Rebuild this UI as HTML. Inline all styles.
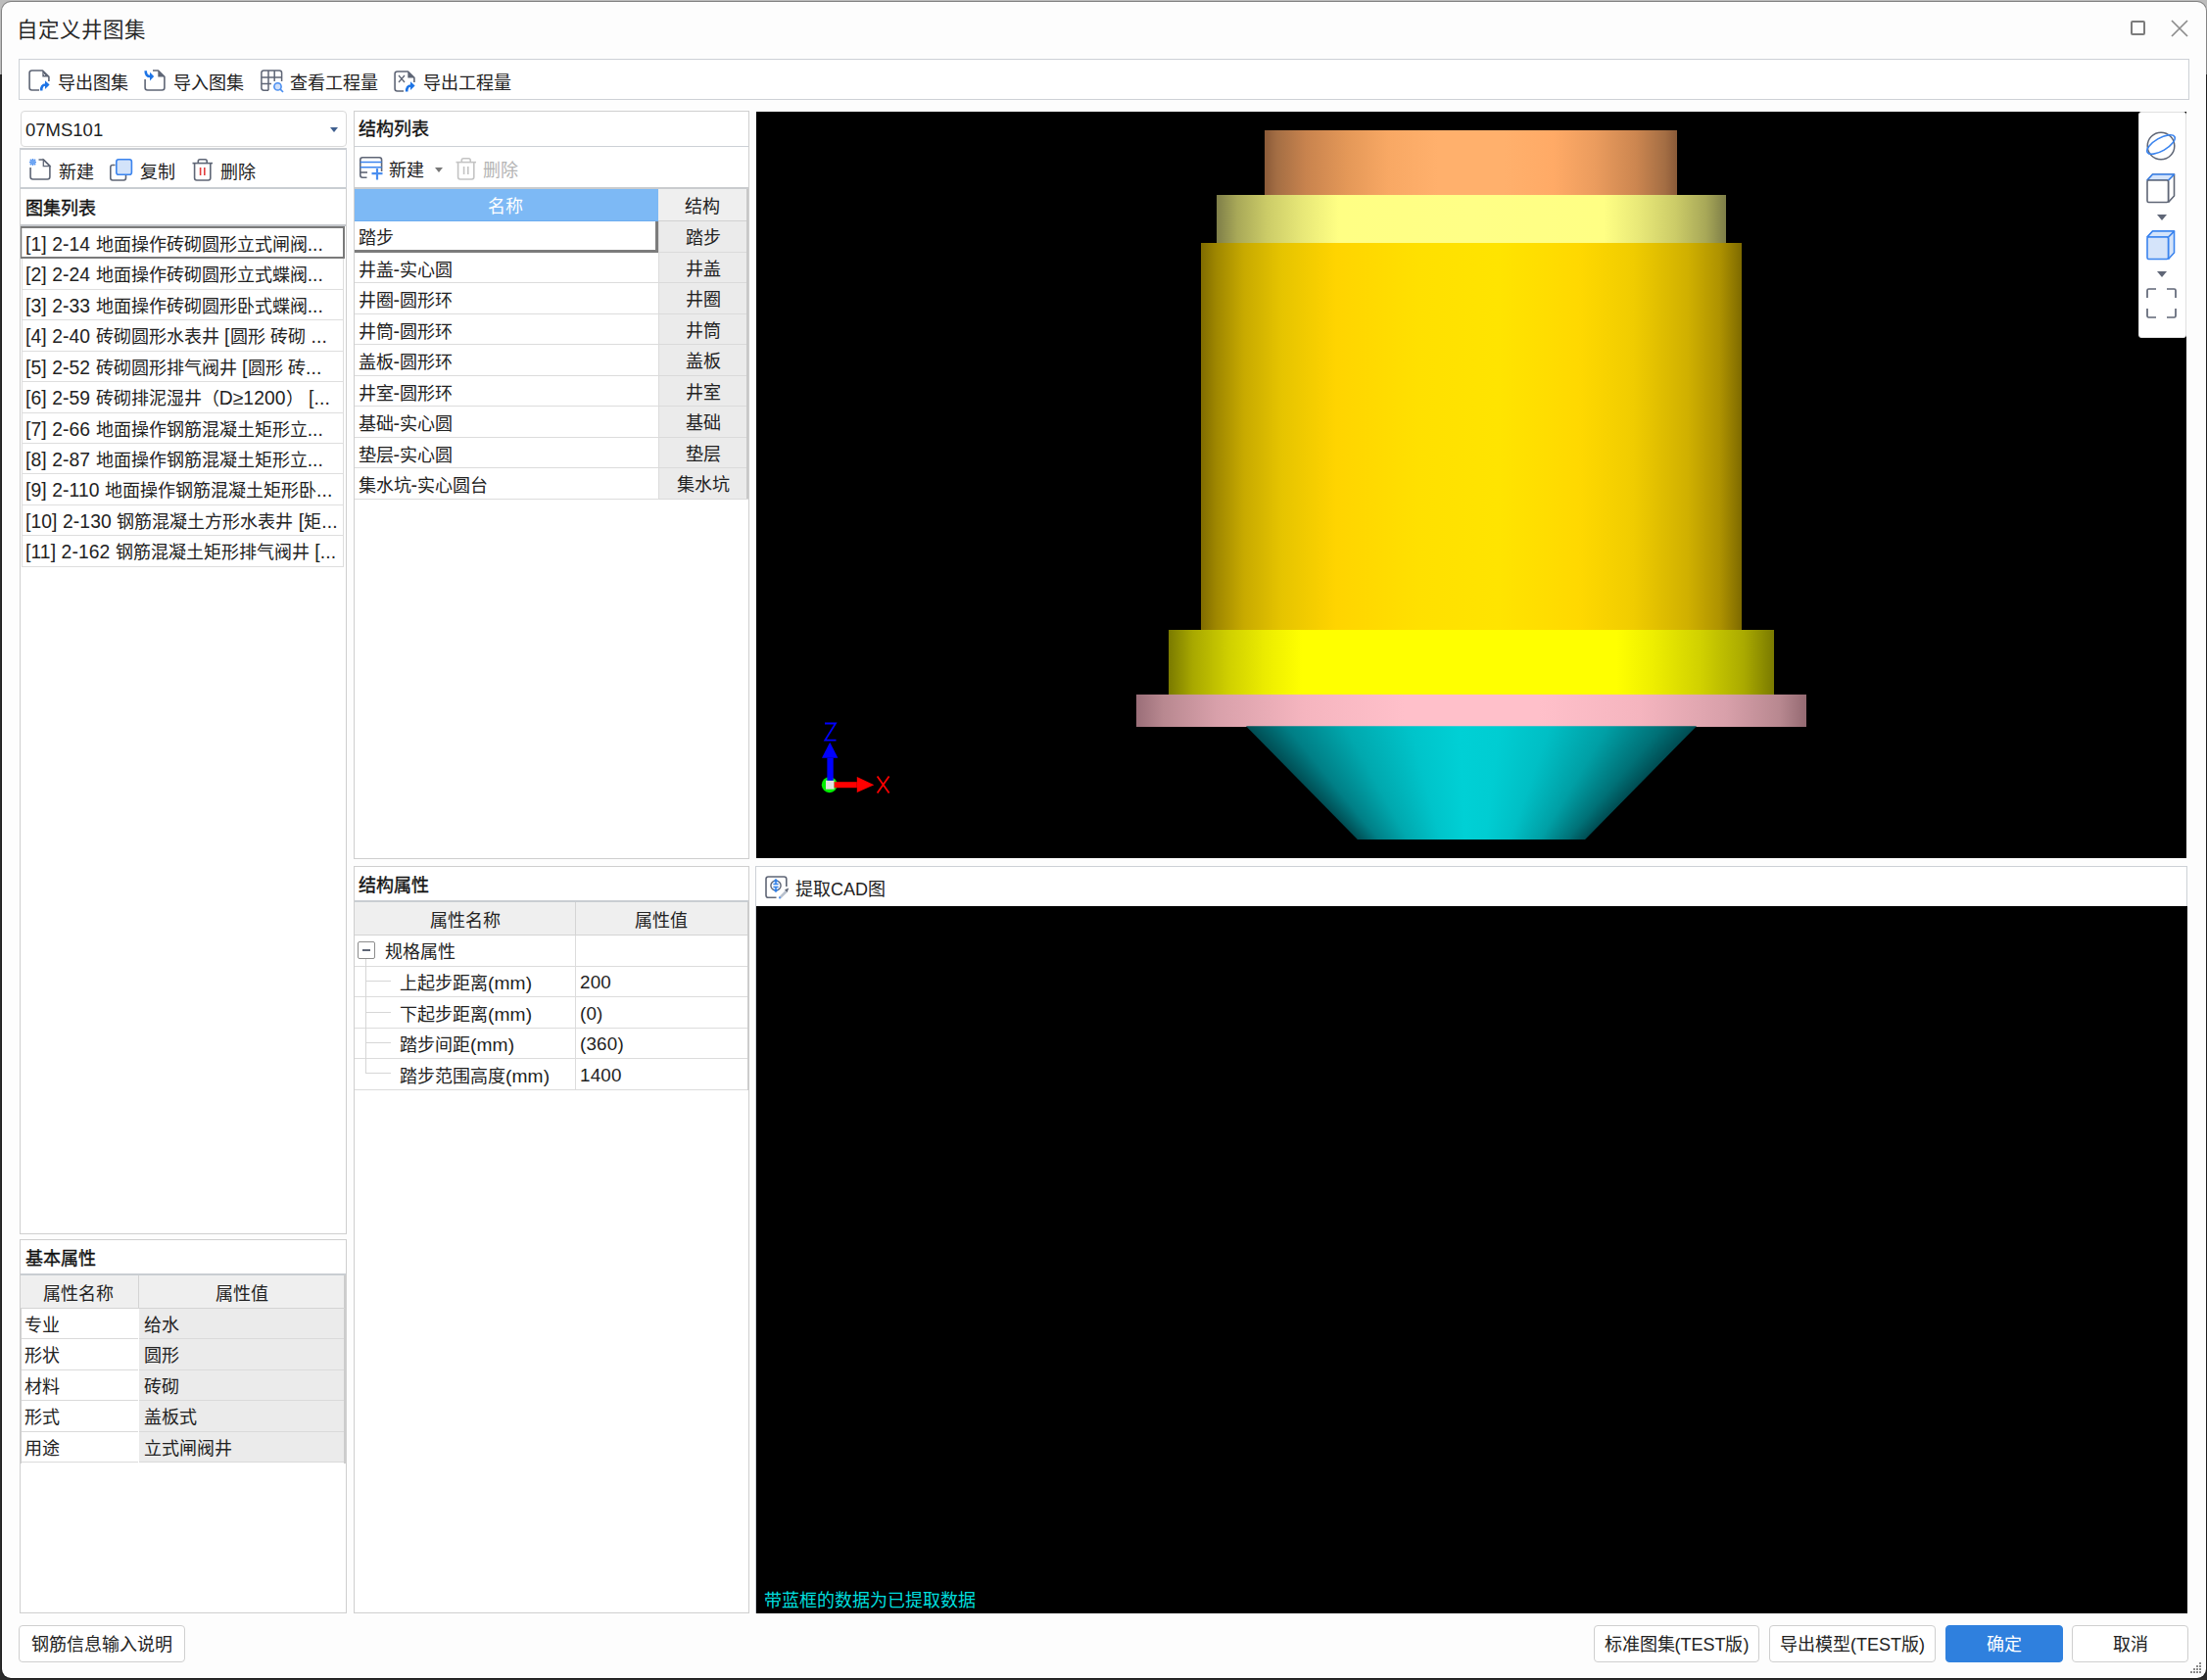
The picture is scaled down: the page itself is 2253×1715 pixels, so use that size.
<!DOCTYPE html>
<html lang="zh-CN">
<head>
<meta charset="utf-8">
<style>
*{margin:0;padding:0;box-sizing:border-box}
html,body{width:2253px;height:1715px;overflow:hidden;background:#2b2b2b}
body{position:relative;font-family:"Liberation Sans",sans-serif;font-size:18px;color:#222}
.a{position:absolute}
.t{position:absolute;white-space:nowrap;line-height:1;}
svg{position:absolute;overflow:visible}
</style>
</head>
<body>

<div class="a" style="left:0px;top:0px;width:2253px;height:76px;background:#bcbcbc"></div>
<div class="a" style="left:0.5px;top:0.5px;width:2252px;height:1713px;background:#fdfdfd;background-clip:padding-box;border:1.5px solid rgba(0,0,0,.3);border-radius:10px"></div>
<div class="t" style="left:16.5px;top:21.2px;font-size:21.5px;color:#2a2a2a;">自定义井图集</div>
<div class="a" style="left:2175px;top:21px;width:15px;height:15px;border:2px solid #7c7c7c;border-radius:2px"></div>
<svg style="left:2216px;top:20px" width="18" height="18" viewBox="0 0 18 18"><path d="M1 1 L17 17 M17 1 L1 17" stroke="#8c8c8c" stroke-width="1.7"/></svg>
<div class="a" style="left:19px;top:60px;width:2216px;height:42px;background:#fff;border:1px solid #cdd1d6"></div>
<svg style="left:29px;top:71px" width="22" height="22" viewBox="0 0 22 22"><path d="M11 21 H3.6 Q1.1 21 1.1 18.5 V3.5 Q1.1 1 3.6 1 H14.5 L20.9 7.4 V12" fill="none" stroke="#5f6676" stroke-width="1.6" stroke-linejoin="round"/><path d="M14.3 1 V7.6 H20.9 Z" fill="#5f6676"/><path d="M15.5 4.5 l1.5 1.5" stroke="#fff" stroke-width="1"/><path d="M13.2 21.5 Q13 15.5 17.5 15.5" fill="none" stroke="#1d74e6" stroke-width="2.6"/><path d="M17 11.2 L21.6 15.6 L17 20 Z" fill="#1d74e6"/></svg>
<div class="t" style="left:59px;top:76px;font-size:18px;color:#222;">导出图集</div>
<svg style="left:147px;top:71px" width="22" height="22" viewBox="0 0 22 22"><path d="M9 1 H14.5 L20.9 7.4 V18.5 Q20.9 21 18.4 21 H3.6 Q1.1 21 1.1 18.5 V10" fill="none" stroke="#5f6676" stroke-width="1.6" stroke-linejoin="round"/><path d="M14.3 1 V7.6 H20.9 Z" fill="#5f6676"/><path d="M1.7 1.3 Q1.5 7 6.5 7" fill="none" stroke="#1d74e6" stroke-width="2.6"/><path d="M6 2.8 L10.2 7.1 L6 11.5 Z" fill="#1d74e6"/></svg>
<div class="t" style="left:177px;top:76px;font-size:18px;color:#222;">导入图集</div>
<svg style="left:266px;top:71px" width="24" height="24" viewBox="0 0 24 24">
<path d="M8 21.2 H3.3 Q0.9 21.2 0.9 18.8 V3.3 Q0.9 0.9 3.3 0.9 H19.2 Q21.6 0.9 21.6 3.3 V12" fill="none" stroke="#5f6676" stroke-width="1.5"/>
<path d="M0.9 8 H21.6 M0.9 14.5 H11 M8 0.9 V21.2 M14.2 0.9 V12" stroke="#5f6676" stroke-width="1.5"/>
<circle cx="17.5" cy="17.4" r="3.6" fill="#cfe0fb" stroke="#4a8ef0" stroke-width="1.6"/>
<path d="M20.2 20.1 L23 23" stroke="#4a8ef0" stroke-width="1.6"/>
</svg>
<div class="t" style="left:296px;top:76px;font-size:18px;color:#222;">查看工程量</div>
<svg style="left:402px;top:72px" width="22" height="22" viewBox="0 0 22 22"><path d="M10 21 H3.6 Q1.1 21 1.1 18.5 V3.5 Q1.1 1 3.6 1 H14.5 L20.9 7.4 V12" fill="none" stroke="#5f6676" stroke-width="1.6" stroke-linejoin="round"/><path d="M14.3 1 V7.6 H20.9 Z" fill="#5f6676"/><path d="M5 5 L11 12 M11 5 L5 12" stroke="#5f6676" stroke-width="1.3"/><path d="M13.2 21.5 Q13 15.5 17.5 15.5" fill="none" stroke="#1d74e6" stroke-width="2.6"/><path d="M17 11.2 L21.6 15.6 L17 20 Z" fill="#1d74e6"/></svg>
<div class="t" style="left:432px;top:76px;font-size:18px;color:#222;">导出工程量</div>
<div class="a" style="left:21px;top:113px;width:333px;height:37px;background:#fff;border:1px solid #d9d9d9;border-radius:4px"></div>
<div class="t" style="left:26px;top:124px;font-size:18.5px;color:#222;">07MS101</div>
<svg style="left:337px;top:130px" width="8" height="5" viewBox="0 0 8 5"><path d="M0 0 H8 L4 5 Z" fill="#3f5f8f"/></svg>
<div class="a" style="left:20px;top:151px;width:334px;height:42px;background:#fff;border:1px solid #cdd1d6;border-top:2px solid #c9cdd2"></div>
<svg style="left:30px;top:162px" width="22" height="22" viewBox="0 0 22 22"><path d="M9.5 1 H14.5 L20.9 7.4 V18.5 Q20.9 21 18.4 21 H3.6 Q1.1 21 1.1 18.5 V9" fill="none" stroke="#5f6676" stroke-width="1.6" stroke-linejoin="round"/><path d="M14.3 1 V7.6 H20.9 Z" fill="none" stroke="#5f6676" stroke-width="1.3"/><path d="M0.8 0.8 L6.2 6.2 M6.2 0.8 L0.8 6.2 M3.5 0 V7 M0 3.5 H7" stroke="#4a8ef0" stroke-width="1.4"/><rect x="1.5" y="1.5" width="4" height="4" fill="#8ab8f6" opacity=".6"/></svg>
<div class="t" style="left:60px;top:167px;font-size:18px;color:#222;">新建</div>
<svg style="left:112px;top:162px" width="24" height="23" viewBox="0 0 24 23">
<path d="M5.5 6.5 H3 Q0.8 6.5 0.8 8.7 V19.8 Q0.8 22 3 22 H14.3 Q16.5 22 16.5 19.8 V16.5" fill="none" stroke="#5f6676" stroke-width="1.6"/>
<rect x="6.8" y="0.8" width="15.6" height="15.4" rx="2.3" fill="#d3e3fa" stroke="#3b84ee" stroke-width="1.6"/>
</svg>
<div class="t" style="left:143px;top:167px;font-size:18px;color:#222;">复制</div>
<svg style="left:196px;top:162px" width="22" height="23" viewBox="0 0 22 23">
<path d="M0.5 4.6 H21" stroke="#5f6676" stroke-width="1.6"/>
<path d="M6.3 4.6 V2.6 Q6.3 0.8 8.1 0.8 H13.4 Q15.2 0.8 15.2 2.6 V4.6" fill="none" stroke="#5f6676" stroke-width="1.6"/>
<path d="M2.6 4.6 V19.8 Q2.6 22 4.8 22 H16.6 Q18.8 22 18.8 19.8 V4.6" fill="none" stroke="#5f6676" stroke-width="1.6"/>
<path d="M8.6 9 V17 M12.8 9 V17" stroke="#e23c3c" stroke-width="1.6"/>
</svg>
<div class="t" style="left:225px;top:167px;font-size:18px;color:#222;">删除</div>
<div class="a" style="left:20px;top:192px;width:334px;height:1068px;background:#fff;border:1px solid #cfcfcf"></div>
<div class="a" style="left:21px;top:193px;width:332px;height:38px;background:#fff;border-bottom:2px solid #c4c7cb"></div>
<div class="a" style="left:21px;top:191px;width:332px;height:2px;background:#c9cdd2"></div>
<div class="t" style="left:26px;top:204px;font-size:18px;color:#111;-webkit-text-stroke:.35px #111">图集列表</div>
<div class="a" style="left:22px;top:232.0px;width:329px;height:32.43px;background:#fff;border:1px solid #dedede"></div>
<div class="t" style="left:26px;top:240.0px;font-size:18px;color:#222;"><span style="font-size:19.3px;letter-spacing:0.1px">[1] 2-14 </span>地面操作砖砌圆形立式闸阀<span style="font-size:19.3px;letter-spacing:0.1px">...</span></div>
<div class="a" style="left:22px;top:263.43px;width:329px;height:32.43px;background:#fff;border:1px solid #dedede"></div>
<div class="t" style="left:26px;top:271.43px;font-size:18px;color:#222;"><span style="font-size:19.3px;letter-spacing:0.1px">[2] 2-24 </span>地面操作砖砌圆形立式蝶阀<span style="font-size:19.3px;letter-spacing:0.1px">...</span></div>
<div class="a" style="left:22px;top:294.86px;width:329px;height:32.43px;background:#fff;border:1px solid #dedede"></div>
<div class="t" style="left:26px;top:302.86px;font-size:18px;color:#222;"><span style="font-size:19.3px;letter-spacing:0.1px">[3] 2-33 </span>地面操作砖砌圆形卧式蝶阀<span style="font-size:19.3px;letter-spacing:0.1px">...</span></div>
<div class="a" style="left:22px;top:326.29px;width:329px;height:32.43px;background:#fff;border:1px solid #dedede"></div>
<div class="t" style="left:26px;top:334.29px;font-size:18px;color:#222;"><span style="font-size:19.3px;letter-spacing:0.1px">[4] 2-40 </span>砖砌圆形水表井<span style="font-size:19.3px;letter-spacing:0.1px"> [</span>圆形<span style="font-size:19.3px;letter-spacing:0.1px"> </span>砖砌<span style="font-size:19.3px;letter-spacing:0.1px"> ...</span></div>
<div class="a" style="left:22px;top:357.72px;width:329px;height:32.43px;background:#fff;border:1px solid #dedede"></div>
<div class="t" style="left:26px;top:365.72px;font-size:18px;color:#222;"><span style="font-size:19.3px;letter-spacing:0.1px">[5] 2-52 </span>砖砌圆形排气阀井<span style="font-size:19.3px;letter-spacing:0.1px"> [</span>圆形<span style="font-size:19.3px;letter-spacing:0.1px"> </span>砖<span style="font-size:19.3px;letter-spacing:0.1px">...</span></div>
<div class="a" style="left:22px;top:389.15px;width:329px;height:32.43px;background:#fff;border:1px solid #dedede"></div>
<div class="t" style="left:26px;top:397.15px;font-size:18px;color:#222;"><span style="font-size:19.3px;letter-spacing:0.1px">[6] 2-59 </span>砖砌排泥湿井（<span style="font-size:19.3px;letter-spacing:0.1px">D≥1200</span>）<span style="font-size:19.3px;letter-spacing:0.1px"> [...</span></div>
<div class="a" style="left:22px;top:420.58px;width:329px;height:32.43px;background:#fff;border:1px solid #dedede"></div>
<div class="t" style="left:26px;top:428.58px;font-size:18px;color:#222;"><span style="font-size:19.3px;letter-spacing:0.1px">[7] 2-66 </span>地面操作钢筋混凝土矩形立<span style="font-size:19.3px;letter-spacing:0.1px">...</span></div>
<div class="a" style="left:22px;top:452.01px;width:329px;height:32.43px;background:#fff;border:1px solid #dedede"></div>
<div class="t" style="left:26px;top:460.01px;font-size:18px;color:#222;"><span style="font-size:19.3px;letter-spacing:0.1px">[8] 2-87 </span>地面操作钢筋混凝土矩形立<span style="font-size:19.3px;letter-spacing:0.1px">...</span></div>
<div class="a" style="left:22px;top:483.44px;width:329px;height:32.43px;background:#fff;border:1px solid #dedede"></div>
<div class="t" style="left:26px;top:491.44px;font-size:18px;color:#222;"><span style="font-size:19.3px;letter-spacing:0.1px">[9] 2-110 </span>地面操作钢筋混凝土矩形卧<span style="font-size:19.3px;letter-spacing:0.1px">...</span></div>
<div class="a" style="left:22px;top:514.87px;width:329px;height:32.43px;background:#fff;border:1px solid #dedede"></div>
<div class="t" style="left:26px;top:522.87px;font-size:18px;color:#222;"><span style="font-size:19.3px;letter-spacing:0.1px">[10] 2-130 </span>钢筋混凝土方形水表井<span style="font-size:19.3px;letter-spacing:0.1px"> [</span>矩<span style="font-size:19.3px;letter-spacing:0.1px">...</span></div>
<div class="a" style="left:22px;top:546.3px;width:329px;height:32.43px;background:#fff;border:1px solid #dedede"></div>
<div class="t" style="left:26px;top:554.3px;font-size:18px;color:#222;"><span style="font-size:19.3px;letter-spacing:0.1px">[11] 2-162 </span>钢筋混凝土矩形排气阀井<span style="font-size:19.3px;letter-spacing:0.1px"> [...</span></div>
<div class="a" style="left:21px;top:231px;width:331px;height:33px;border:2px solid #7a7a7a;border-left-width:1px"></div>
<div class="a" style="left:20px;top:1265px;width:334px;height:382px;background:#fff;border:1px solid #cfcfcf"></div>
<div class="a" style="left:21px;top:1266px;width:332px;height:36px;background:#fff;border-bottom:2px solid #c9cdd2"></div>
<div class="t" style="left:26px;top:1276px;font-size:18px;color:#111;-webkit-text-stroke:.35px #111">基本属性</div>
<div class="a" style="left:21px;top:1302px;width:332px;height:34px;background:#efefef;border-bottom:1px solid #d4d4d4;border-right:2px solid #cccccc"></div>
<div class="a" style="left:141px;top:1302px;width:1px;height:34px;background:#d4d4d4"></div>
<div class="t" style="left:44px;top:1312px;font-size:18px;color:#222;">属性名称</div>
<div class="t" style="left:220px;top:1312px;font-size:18px;color:#222;">属性值</div>
<div class="a" style="left:22px;top:1336.0px;width:119px;height:31.45px;background:#fff;border-bottom:1px solid #dadada"></div>
<div class="a" style="left:142px;top:1336.0px;width:209px;height:31.45px;background:#ebebeb;border-bottom:1px solid #dadada"></div>
<div class="t" style="left:25px;top:1343.8px;font-size:18px;color:#222;">专业</div>
<div class="t" style="left:146.5px;top:1343.8px;font-size:18px;color:#222;">给水</div>
<div class="a" style="left:22px;top:1367.45px;width:119px;height:31.45px;background:#fff;border-bottom:1px solid #dadada"></div>
<div class="a" style="left:142px;top:1367.45px;width:209px;height:31.45px;background:#ebebeb;border-bottom:1px solid #dadada"></div>
<div class="t" style="left:25px;top:1375.25px;font-size:18px;color:#222;">形状</div>
<div class="t" style="left:146.5px;top:1375.25px;font-size:18px;color:#222;">圆形</div>
<div class="a" style="left:22px;top:1398.9px;width:119px;height:31.45px;background:#fff;border-bottom:1px solid #dadada"></div>
<div class="a" style="left:142px;top:1398.9px;width:209px;height:31.45px;background:#ebebeb;border-bottom:1px solid #dadada"></div>
<div class="t" style="left:25px;top:1406.7px;font-size:18px;color:#222;">材料</div>
<div class="t" style="left:146.5px;top:1406.7px;font-size:18px;color:#222;">砖砌</div>
<div class="a" style="left:22px;top:1430.35px;width:119px;height:31.45px;background:#fff;border-bottom:1px solid #dadada"></div>
<div class="a" style="left:142px;top:1430.35px;width:209px;height:31.45px;background:#ebebeb;border-bottom:1px solid #dadada"></div>
<div class="t" style="left:25px;top:1438.15px;font-size:18px;color:#222;">形式</div>
<div class="t" style="left:146.5px;top:1438.15px;font-size:18px;color:#222;">盖板式</div>
<div class="a" style="left:22px;top:1461.8px;width:119px;height:31.45px;background:#fff;border-bottom:1px solid #dadada"></div>
<div class="a" style="left:142px;top:1461.8px;width:209px;height:31.45px;background:#ebebeb;border-bottom:1px solid #dadada"></div>
<div class="t" style="left:25px;top:1469.6px;font-size:18px;color:#222;">用途</div>
<div class="t" style="left:146.5px;top:1469.6px;font-size:18px;color:#222;">立式闸阀井</div>
<div class="a" style="left:21px;top:1336px;width:1px;height:158px;background:#cfcfcf"></div>
<div class="a" style="left:351px;top:1336px;width:2px;height:158px;background:#cccccc"></div>
<div class="a" style="left:361px;top:113px;width:404px;height:764px;background:#fff;border:1px solid #cfcfcf"></div>
<div class="a" style="left:362px;top:113px;width:402px;height:37px;border-bottom:1px solid #cdd1d6"></div>
<div class="t" style="left:365.5px;top:123px;font-size:18px;color:#111;-webkit-text-stroke:.35px #111">结构列表</div>
<svg style="left:367px;top:160px" width="25" height="24" viewBox="0 0 25 24">
<path d="M7.5 21.2 H3.2 Q0.8 21.2 0.8 18.8 V3.2 Q0.8 0.8 3.2 0.8 H20.2 Q22.6 0.8 22.6 3.2 V15" fill="none" stroke="#5f6676" stroke-width="1.6"/>
<path d="M0.8 5.5 H22.6 M0.8 10.8 H22.6" stroke="#3b84ee" stroke-width="1.6"/>
<path d="M0.8 16 H8" stroke="#5f6676" stroke-width="1.6"/>
<path d="M12.5 17.2 H23.5 M18 12 V23.5" stroke="#4a8ef0" stroke-width="2.2"/>
</svg>
<div class="t" style="left:397px;top:165px;font-size:18px;color:#222;">新建</div>
<svg style="left:444px;top:171px" width="8" height="5" viewBox="0 0 8 5"><path d="M0 0 H8 L4 5 Z" fill="#777"/></svg>
<svg style="left:465px;top:161px" width="22" height="23" viewBox="0 0 22 23">
<path d="M0.5 4.6 H21" stroke="#c4c4c4" stroke-width="1.6"/>
<path d="M6.3 4.6 V2.6 Q6.3 0.8 8.1 0.8 H13.4 Q15.2 0.8 15.2 2.6 V4.6" fill="none" stroke="#c4c4c4" stroke-width="1.6"/>
<path d="M2.6 4.6 V19.8 Q2.6 22 4.8 22 H16.6 Q18.8 22 18.8 19.8 V4.6" fill="none" stroke="#c4c4c4" stroke-width="1.6"/>
<path d="M8.6 9 V17 M12.8 9 V17" stroke="#c4c4c4" stroke-width="1.6"/>
</svg>
<div class="t" style="left:493px;top:165px;font-size:18px;color:#b4b4b4;">删除</div>
<div class="a" style="left:362px;top:191px;width:402px;height:2px;background:#c9cbce"></div>
<div class="a" style="left:362px;top:193px;width:310px;height:33px;background:#7db9f5;border-bottom:1px solid #6eaef0"></div>
<div class="t" style="left:498px;top:202px;font-size:18px;color:#fff;">名称</div>
<div class="a" style="left:672px;top:193px;width:92px;height:33px;background:#efefef;border-bottom:1px solid #d2d2d2"></div>
<div class="t" style="left:699px;top:202px;font-size:18px;color:#222;">结构</div>
<div class="a" style="left:362px;top:226.0px;width:310px;height:31.5px;background:#fff;border-bottom:1px solid #dcdcdc"></div>
<div class="a" style="left:672px;top:226.0px;width:92px;height:31.5px;background:#ebebeb;border-bottom:1px solid #dadada;border-left:1px solid #dcdcdc"></div>
<div class="t" style="left:365.5px;top:234.0px;font-size:18px;color:#222;">踏步</div>
<div class="t" style="left:700px;top:234.0px;font-size:18px;color:#222;">踏步</div>
<div class="a" style="left:362px;top:257.5px;width:310px;height:31.5px;background:#fff;border-bottom:1px solid #dcdcdc"></div>
<div class="a" style="left:672px;top:257.5px;width:92px;height:31.5px;background:#ebebeb;border-bottom:1px solid #dadada;border-left:1px solid #dcdcdc"></div>
<div class="t" style="left:365.5px;top:265.5px;font-size:18px;color:#222;">井盖<span style="font-size:19.5px;letter-spacing:0px">-</span>实心圆</div>
<div class="t" style="left:700px;top:265.5px;font-size:18px;color:#222;">井盖</div>
<div class="a" style="left:362px;top:289.0px;width:310px;height:31.5px;background:#fff;border-bottom:1px solid #dcdcdc"></div>
<div class="a" style="left:672px;top:289.0px;width:92px;height:31.5px;background:#ebebeb;border-bottom:1px solid #dadada;border-left:1px solid #dcdcdc"></div>
<div class="t" style="left:365.5px;top:297.0px;font-size:18px;color:#222;">井圈<span style="font-size:19.5px;letter-spacing:0px">-</span>圆形环</div>
<div class="t" style="left:700px;top:297.0px;font-size:18px;color:#222;">井圈</div>
<div class="a" style="left:362px;top:320.5px;width:310px;height:31.5px;background:#fff;border-bottom:1px solid #dcdcdc"></div>
<div class="a" style="left:672px;top:320.5px;width:92px;height:31.5px;background:#ebebeb;border-bottom:1px solid #dadada;border-left:1px solid #dcdcdc"></div>
<div class="t" style="left:365.5px;top:328.5px;font-size:18px;color:#222;">井筒<span style="font-size:19.5px;letter-spacing:0px">-</span>圆形环</div>
<div class="t" style="left:700px;top:328.5px;font-size:18px;color:#222;">井筒</div>
<div class="a" style="left:362px;top:352.0px;width:310px;height:31.5px;background:#fff;border-bottom:1px solid #dcdcdc"></div>
<div class="a" style="left:672px;top:352.0px;width:92px;height:31.5px;background:#ebebeb;border-bottom:1px solid #dadada;border-left:1px solid #dcdcdc"></div>
<div class="t" style="left:365.5px;top:360.0px;font-size:18px;color:#222;">盖板<span style="font-size:19.5px;letter-spacing:0px">-</span>圆形环</div>
<div class="t" style="left:700px;top:360.0px;font-size:18px;color:#222;">盖板</div>
<div class="a" style="left:362px;top:383.5px;width:310px;height:31.5px;background:#fff;border-bottom:1px solid #dcdcdc"></div>
<div class="a" style="left:672px;top:383.5px;width:92px;height:31.5px;background:#ebebeb;border-bottom:1px solid #dadada;border-left:1px solid #dcdcdc"></div>
<div class="t" style="left:365.5px;top:391.5px;font-size:18px;color:#222;">井室<span style="font-size:19.5px;letter-spacing:0px">-</span>圆形环</div>
<div class="t" style="left:700px;top:391.5px;font-size:18px;color:#222;">井室</div>
<div class="a" style="left:362px;top:415.0px;width:310px;height:31.5px;background:#fff;border-bottom:1px solid #dcdcdc"></div>
<div class="a" style="left:672px;top:415.0px;width:92px;height:31.5px;background:#ebebeb;border-bottom:1px solid #dadada;border-left:1px solid #dcdcdc"></div>
<div class="t" style="left:365.5px;top:423.0px;font-size:18px;color:#222;">基础<span style="font-size:19.5px;letter-spacing:0px">-</span>实心圆</div>
<div class="t" style="left:700px;top:423.0px;font-size:18px;color:#222;">基础</div>
<div class="a" style="left:362px;top:446.5px;width:310px;height:31.5px;background:#fff;border-bottom:1px solid #dcdcdc"></div>
<div class="a" style="left:672px;top:446.5px;width:92px;height:31.5px;background:#ebebeb;border-bottom:1px solid #dadada;border-left:1px solid #dcdcdc"></div>
<div class="t" style="left:365.5px;top:454.5px;font-size:18px;color:#222;">垫层<span style="font-size:19.5px;letter-spacing:0px">-</span>实心圆</div>
<div class="t" style="left:700px;top:454.5px;font-size:18px;color:#222;">垫层</div>
<div class="a" style="left:362px;top:478.0px;width:310px;height:31.5px;background:#fff;border-bottom:1px solid #dcdcdc"></div>
<div class="a" style="left:672px;top:478.0px;width:92px;height:31.5px;background:#ebebeb;border-bottom:1px solid #dadada;border-left:1px solid #dcdcdc"></div>
<div class="t" style="left:365.5px;top:486.0px;font-size:18px;color:#222;">集水坑<span style="font-size:19.5px;letter-spacing:0px">-</span>实心圆台</div>
<div class="t" style="left:691px;top:486.0px;font-size:18px;color:#222;">集水坑</div>
<div class="a" style="left:762px;top:193px;width:2px;height:315.5px;background:#c8c8c8"></div>
<div class="a" style="left:362px;top:226px;width:310px;height:32px;border-right:3px solid #7c7c7c;border-bottom:3px solid #7c7c7c"></div>
<div class="a" style="left:361px;top:884px;width:404px;height:763px;background:#fff;border:1px solid #cfcfcf"></div>
<div class="a" style="left:362px;top:885px;width:402px;height:36px;border-bottom:2px solid #c9cdd2"></div>
<div class="t" style="left:366px;top:895px;font-size:18px;color:#111;-webkit-text-stroke:.35px #111">结构属性</div>
<div class="a" style="left:362px;top:921px;width:401px;height:34px;background:#efefef;border-bottom:1px solid #d4d4d4"></div>
<div class="a" style="left:587px;top:921px;width:1px;height:34px;background:#d4d4d4"></div>
<div class="t" style="left:439px;top:931px;font-size:18px;color:#222;">属性名称</div>
<div class="t" style="left:648px;top:931px;font-size:18px;color:#222;">属性值</div>
<div class="a" style="left:362px;top:955.0px;width:401px;height:31.5px;background:#fff;border-bottom:1px solid #dcdcdc"></div>
<div class="a" style="left:587px;top:955.0px;width:1px;height:31.5px;background:#dcdcdc"></div>
<div class="t" style="left:393px;top:963.0px;font-size:18px;color:#222;">规格属性</div>
<div class="a" style="left:362px;top:986.5px;width:401px;height:31.5px;background:#fff;border-bottom:1px solid #dcdcdc"></div>
<div class="a" style="left:587px;top:986.5px;width:1px;height:31.5px;background:#dcdcdc"></div>
<div class="t" style="left:408px;top:994.0px;font-size:18px;color:#222;">上起步距离<span style="font-size:19.2px;letter-spacing:0.1px">(mm)</span></div>
<div class="t" style="left:592px;top:994.0px;font-size:18px;color:#222;"><span style="font-size:18.8px;letter-spacing:0.2px">200</span></div>
<div class="a" style="left:362px;top:1018.0px;width:401px;height:31.5px;background:#fff;border-bottom:1px solid #dcdcdc"></div>
<div class="a" style="left:587px;top:1018.0px;width:1px;height:31.5px;background:#dcdcdc"></div>
<div class="t" style="left:408px;top:1025.5px;font-size:18px;color:#222;">下起步距离<span style="font-size:19.2px;letter-spacing:0.1px">(mm)</span></div>
<div class="t" style="left:592px;top:1025.5px;font-size:18px;color:#222;"><span style="font-size:18.8px;letter-spacing:0.2px">(0)</span></div>
<div class="a" style="left:362px;top:1049.5px;width:401px;height:31.5px;background:#fff;border-bottom:1px solid #dcdcdc"></div>
<div class="a" style="left:587px;top:1049.5px;width:1px;height:31.5px;background:#dcdcdc"></div>
<div class="t" style="left:408px;top:1057.0px;font-size:18px;color:#222;">踏步间距<span style="font-size:19.2px;letter-spacing:0.1px">(mm)</span></div>
<div class="t" style="left:592px;top:1057.0px;font-size:18px;color:#222;"><span style="font-size:18.8px;letter-spacing:0.2px">(360)</span></div>
<div class="a" style="left:362px;top:1081.0px;width:401px;height:31.5px;background:#fff;border-bottom:1px solid #dcdcdc"></div>
<div class="a" style="left:587px;top:1081.0px;width:1px;height:31.5px;background:#dcdcdc"></div>
<div class="t" style="left:408px;top:1088.5px;font-size:18px;color:#222;">踏步范围高度<span style="font-size:19.2px;letter-spacing:0.1px">(mm)</span></div>
<div class="t" style="left:592px;top:1088.5px;font-size:18px;color:#222;"><span style="font-size:18.8px;letter-spacing:0.2px">1400</span></div>
<div class="a" style="left:763px;top:921px;width:2px;height:192px;background:#cccccc"></div>
<div class="a" style="left:365px;top:961px;width:18px;height:18px;border:1px solid #8c8c8c;border-radius:2px;background:#fff"></div>
<div class="a" style="left:370px;top:969px;width:8px;height:2px;background:#5f6676"></div>
<div class="a" style="left:373px;top:979px;width:1px;height:117px;background:#d6d6d6"></div>
<div class="a" style="left:374px;top:1001px;width:25px;height:1px;background:#d6d6d6"></div>
<div class="a" style="left:374px;top:1033px;width:25px;height:1px;background:#d6d6d6"></div>
<div class="a" style="left:374px;top:1064px;width:25px;height:1px;background:#d6d6d6"></div>
<div class="a" style="left:374px;top:1095px;width:25px;height:1px;background:#d6d6d6"></div>
<div class="a" style="left:772px;top:114px;width:1460px;height:762px;background:#000"></div>
<div class="a" style="left:1291.4px;top:133.3px;width:421.1px;height:65.7px;background:linear-gradient(90deg,#8a5a38 0%,#a46e44 3%,#c8834e 10%,#e49858 20%,#f8a864 30%,#ffb06c 42%,#ffb06c 58%,#ffaa66 70%,#eb9c5e 80%,#cc8650 90%,#a46e44 97%,#8a5a38 100%)"></div>
<div class="a" style="left:1242px;top:198.5px;width:519.8px;height:50.5px;background:linear-gradient(90deg,#7e7e48 0%,#a8a858 4%,#cccc68 10%,#e8e878 17%,#ffff84 24%,#ffff86 50%,#ffff84 76%,#e8e878 83%,#cccc68 90%,#a8a858 96%,#7e7e48 100%)"></div>
<div class="a" style="left:1225.8px;top:248.2px;width:552.7px;height:395.3px;background:linear-gradient(90deg,#806c00 0%,#a08800 3%,#c8aa00 8%,#e6c400 15%,#ffd400 25%,#ffe000 40%,#ffe400 55%,#ffd800 70%,#f0cc00 80%,#d0b000 90%,#ae9200 96%,#7e6a00 100%)"></div>
<div class="a" style="left:1192.8px;top:642.8px;width:618.2px;height:66.7px;background:linear-gradient(90deg,#7a7a00 0%,#a8a800 4%,#d0d000 10%,#ecec00 16%,#ffff00 22%,#ffff00 74%,#eeee00 80%,#d0d000 88%,#aaaa00 95%,#7a7a00 100%)"></div>
<div class="a" style="left:1159.8px;top:708.7px;width:684.2px;height:32.9px;background:linear-gradient(90deg,#9a6e78 0%,#b88890 4%,#d8a0aa 12%,#f5b5bf 25%,#ffc0ca 40%,#ffc0ca 60%,#f5b5bf 75%,#d8a0aa 88%,#b88890 96%,#946a72 100%)"></div>
<div class="a" style="left:1272px;top:741.2px;width:460px;height:116px;clip-path:polygon(0 0,100% 0,75.2% 100%,24.8% 100%);background:conic-gradient(from -45deg at 230px 233px,#004a50 0deg,#007f86 6deg,#00a8ae 16deg,#00c4ca 30deg,#00d0d5 42deg,#00cdd2 52deg,#00bfc5 64deg,#009fa5 76deg,#007177 85deg,#004a50 90deg)"></div>
<svg style="left:820px;top:725px" width="100" height="100" viewBox="0 0 100 100">
<circle cx="26.8" cy="76.2" r="8" fill="#00ee00"/>
<rect x="23" y="71.7" width="8.6" height="9" fill="#e0e0e0"/>
<rect x="24.4" y="48.8" width="6.3" height="23" fill="#0000ff"/>
<path d="M19 48.8 L35.4 48.8 L27.2 32.7 Z" fill="#0000ff"/>
<path d="M22 13.5 H33 L22.3 30.6 H33.5" fill="none" stroke="#0000ff" stroke-width="1.8"/>
<rect x="31.6" y="73.2" width="23.2" height="6" fill="#ff0000"/>
<path d="M54.8 68 L72.3 76.2 L54.8 84 Z" fill="#ff0000"/>
<path d="M75.6 67.6 L87.6 84.6 M87.6 67.6 L75.6 84.6" stroke="#ff0000" stroke-width="1.8"/>
</svg>
<div class="a" style="left:2183px;top:114px;width:49px;height:231px;background:#fff;border:1px solid #e0e0e0;border-radius:3px"></div>
<svg style="left:2190px;top:133px" width="32" height="32" viewBox="0 0 32 32">
<circle cx="16" cy="16" r="13.8" fill="none" stroke="#5f6676" stroke-width="1.5"/>
<ellipse cx="16" cy="14.5" rx="16" ry="6.5" transform="rotate(-30 16 14.5)" fill="none" stroke="#3b84ee" stroke-width="1.6"/>
</svg>
<svg style="left:2191px;top:177px" width="31" height="31" viewBox="0 0 31 31">
<path d="M1 7 L6.5 1 H28.5 V23 L22.5 29.5" fill="#fff" stroke="#5f6676" stroke-width="1.6" stroke-linejoin="round"/>
<path d="M1 7 H22.5 L28.5 1 M22.5 7 V29.5" fill="none" stroke="#5f6676" stroke-width="1.6"/>
<path d="M6.5 1 H28.5 L22.5 7 H1 Z" fill="#d5e4fa" stroke="#3b84ee" stroke-width="1.6" stroke-linejoin="round"/>
<rect x="1" y="7" width="21.5" height="22.5" rx="1.5" fill="#fff" stroke="#5f6676" stroke-width="1.6"/>
</svg>
<svg style="left:2202px;top:219px" width="10" height="6" viewBox="0 0 10 6"><path d="M0 0 H10 L5 6 Z" fill="#5f6676"/></svg>
<svg style="left:2191px;top:235px" width="31" height="31" viewBox="0 0 31 31">
<path d="M1 7 L6.5 1 H28.5 V23 L22.5 29.5" fill="#d5e4fa" stroke="#3b84ee" stroke-width="1.6" stroke-linejoin="round"/>
<path d="M1 7 H22.5 L28.5 1 M22.5 7 V29.5" fill="none" stroke="#3b84ee" stroke-width="1.6"/>
<path d="M6.5 1 H28.5 L22.5 7 H1 Z" fill="#d5e4fa" stroke="#3b84ee" stroke-width="1.6" stroke-linejoin="round"/>
<rect x="1" y="7" width="21.5" height="22.5" rx="1.5" fill="#d5e4fa" stroke="#3b84ee" stroke-width="1.6"/>
</svg>
<svg style="left:2202px;top:277px" width="10" height="6" viewBox="0 0 10 6"><path d="M0 0 H10 L5 6 Z" fill="#5f6676"/></svg>
<svg style="left:2191px;top:294px" width="31" height="31" viewBox="0 0 31 31">
<path d="M1 10 V2.5 Q1 1 2.5 1 H10 M21 1 H28.5 Q30 1 30 2.5 V10 M30 21 V28.5 Q30 30 28.5 30 H21 M10 30 H2.5 Q1 30 1 28.5 V21" fill="none" stroke="#5f6676" stroke-width="1.7"/>
</svg>
<div class="a" style="left:771px;top:884px;width:1462px;height:763px;background:#fff;border:1px solid #cdd1d6"></div>
<div class="a" style="left:772px;top:925px;width:1461px;height:722px;background:#000"></div>
<svg style="left:781px;top:894px" width="25" height="24" viewBox="0 0 25 24">
<path d="M11.5 22.3 H3.3 Q1 22.3 1 20 V3.3 Q1 1 3.3 1 H19.5 Q21.8 1 21.8 3.3 V11" fill="none" stroke="#5f6676" stroke-width="1.6"/>
<circle cx="11" cy="10" r="5.1" fill="none" stroke="#5f6676" stroke-width="1.4"/>
<path d="M8.2 6.2 L11 2.8 L13.8 6.2 Z M8.2 13.8 L11 17.2 L13.8 13.8 Z" fill="#2f7fe8"/>
<path d="M11 6 V8.6 M11 11.4 V14 M8.4 8.6 H13.6 M8.4 11.4 H13.6" stroke="#2f7fe8" stroke-width="1.5"/>
<path d="M15 22.6 L21.6 16" stroke="#b9c1cd" stroke-width="2.6"/>
<path d="M20 14.2 L24.2 12.6 L22.6 17 Z" fill="#5f6676"/>
<circle cx="15" cy="22.4" r="1.1" fill="#5a9af0"/>
</svg>
<div class="t" style="left:812px;top:899px;font-size:18px;color:#222;">提取CAD图</div>
<div class="t" style="left:780px;top:1625px;font-size:18px;color:#00dede;">带蓝框的数据为已提取数据</div>
<div class="a" style="left:19px;top:1658.5px;width:170px;height:38px;border-radius:4px;background:#fff;border:1px solid #cfcfcf;color:#222;text-align:center;line-height:39px;font-size:18px;white-space:nowrap">钢筋信息输入说明</div>
<div class="a" style="left:1627px;top:1658.5px;width:169px;height:38px;border-radius:4px;background:#fff;border:1px solid #cfcfcf;color:#222;text-align:center;line-height:39px;font-size:18px;white-space:nowrap">标准图集(TEST版)</div>
<div class="a" style="left:1806px;top:1658.5px;width:170px;height:38px;border-radius:4px;background:#fff;border:1px solid #cfcfcf;color:#222;text-align:center;line-height:39px;font-size:18px;white-space:nowrap">导出模型(TEST版)</div>
<div class="a" style="left:1986px;top:1658.5px;width:120px;height:38px;border-radius:4px;background:#2f80de;border:1px solid #2f80de;color:#fff;text-align:center;line-height:39px;font-size:18px;white-space:nowrap">确定</div>
<div class="a" style="left:2115px;top:1658.5px;width:119px;height:38px;border-radius:4px;background:#fff;border:1px solid #cfcfcf;color:#222;text-align:center;line-height:39px;font-size:18px;white-space:nowrap">取消</div>
<svg style="left:2236px;top:1697px" width="12" height="12" viewBox="0 0 12 12"><g fill="#8a8a8a"><rect x="9" y="0" width="2" height="2"/><rect x="6" y="3" width="2" height="2"/><rect x="9" y="3" width="2" height="2"/><rect x="3" y="6" width="2" height="2"/><rect x="6" y="6" width="2" height="2"/><rect x="9" y="6" width="2" height="2"/><rect x="0" y="9" width="2" height="2"/><rect x="3" y="9" width="2" height="2"/><rect x="6" y="9" width="2" height="2"/><rect x="9" y="9" width="2" height="2"/></g></svg>
</body>
</html>
